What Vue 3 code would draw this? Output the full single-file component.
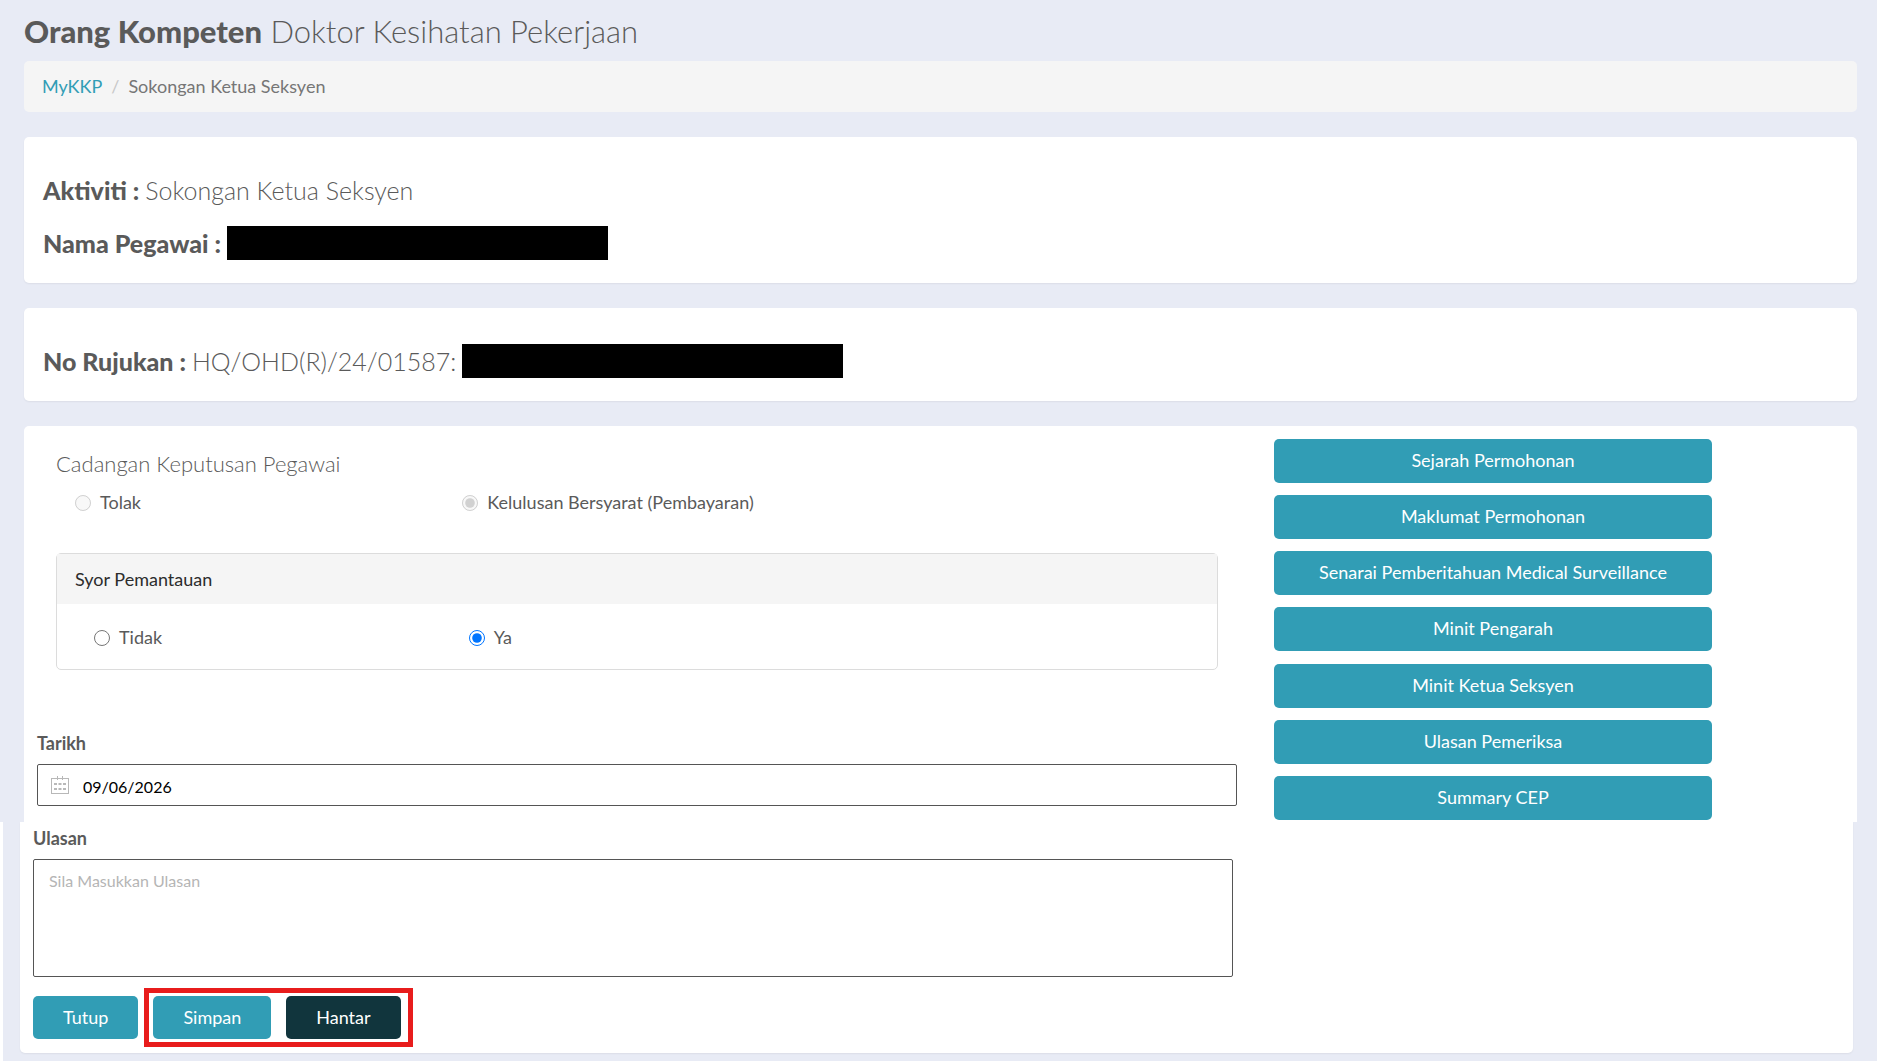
<template>
  <div class="page">
    <main class="upper">
      <h1><strong>Orang Kompeten</strong> Doktor Kesihatan Pekerjaan</h1>

      <nav class="breadcrumb" aria-label="breadcrumb">
        <a href="#">MyKKP</a>
        <span class="separator">/</span>
        <span>Sokongan Ketua Seksyen</span>
      </nav>

      <section class="card info">
        <h2><strong>Aktiviti :</strong> Sokongan Ketua Seksyen</h2>
        <h2><strong>Nama Pegawai :</strong> <span class="redacted"></span></h2>
      </section>

      <section class="card info">
        <h2><strong>No Rujukan :</strong> HQ/OHD(R)/24/01587: <span class="redacted"></span></h2>
      </section>

      <section class="card card-top columns">
        <div class="decision">
          <div class="inset">
            <h3>Cadangan Keputusan Pegawai</h3>
            <div class="radios">
              <label v-for="option in decisions" :key="option">
                <input type="radio" name="decision" :value="option" v-model="decision" disabled />
                {{ option }}
              </label>
            </div>

            <div class="panel">
              <div class="panel-header">Syor Pemantauan</div>
              <div class="panel-body radios">
                <label v-for="option in ['Tidak', 'Ya']" :key="option">
                  <input type="radio" name="monitoring" :value="option" v-model="monitoring" />
                  {{ option }}
                </label>
              </div>
            </div>
          </div>

          <label class="field-label" for="date">Tarikh</label>
          <div class="date-box">
            <svg width="18" height="18" viewBox="0 0 18 18" fill="none" stroke="#b8b8b8" aria-hidden="true">
              <rect x="0.5" y="2.5" width="17" height="15" />
              <path d="M6.5 0v4M11.5 0v4" />
              <path d="M3 8h3M7.5 8h3M12 8h3M3 13h3M7.5 13h3M12 13h3" stroke-width="2" />
            </svg>
            <input id="date" type="text" v-model="date" />
          </div>
        </div>

        <div class="actions">
          <button v-for="action in actions" :key="action" type="button" class="btn">{{ action }}</button>
        </div>
      </section>
    </main>

    <div class="lower">
      <section class="card card-bottom columns">
        <div>
          <label class="field-label" for="comment">Ulasan</label>
          <textarea id="comment" v-model="comment" placeholder="Sila Masukkan Ulasan"></textarea>
          <div class="footer">
            <button type="button" class="btn">Tutup</button>
            <div class="highlight">
              <button type="button" class="btn">Simpan</button>
              <button type="button" class="btn dark">Hantar</button>
            </div>
          </div>
        </div>
      </section>
    </div>
  </div>
</template>

<script setup>
import { ref } from 'vue'

const decisions = ['Tolak', 'Kelulusan Bersyarat (Pembayaran)']
const actions = [
  'Sejarah Permohonan',
  'Maklumat Permohonan',
  'Senarai Pemberitahuan Medical Surveillance',
  'Minit Pengarah',
  'Minit Ketua Seksyen',
  'Ulasan Pemeriksa',
  'Summary CEP'
]

const decision = ref('Kelulusan Bersyarat (Pembayaran)')
const monitoring = ref('Ya')
const date = ref('09/06/2026')
const comment = ref('')
</script>

<style>
body {
  margin: 0;
  background: #e8ebf5;
}
</style>

<style scoped>
.page {
  display: flex;
  flex-direction: column;
  min-height: 100vh;
  color: #5a5a5a;
  font-family: Lato, sans-serif;
  font-size: 18px;
  line-height: 27px;
}

.page * {
  box-sizing: border-box;
}

.upper {
  padding: 11px 20px 0 24px;
}

.lower {
  flex: 1;
  padding: 0 24px 8px 17px;
  border-left: 3px solid #fff;
}

h1,
h2,
h3 {
  margin: 0;
  font-weight: 300;
}

h1 {
  margin-bottom: 10px;
  font-size: 31px;
  line-height: 40px;
}

h1 strong,
h2 strong {
  font-weight: 900;
}

h2 {
  display: flex;
  align-items: center;
  gap: 6px;
  height: 34px;
  font-size: 25px;
}

h3 {
  font-size: 22px;
}

.breadcrumb {
  display: flex;
  gap: 9px;
  padding: 12px 18px;
  margin-bottom: 25px;
  border-radius: 5px;
  background: #f5f5f5;
  color: #767676;
}

.breadcrumb a {
  color: #319db5;
  text-decoration: none;
}

.separator {
  color: #c8c8c8;
}

.card {
  border-radius: 5px;
  background: #fff;
  box-shadow: 0 1px 2px rgba(0, 0, 0, 0.06);
}

.info {
  display: flex;
  flex-direction: column;
  gap: 19px;
  padding: 36px 19px 23px;
  margin-bottom: 25px;
}

.redacted {
  width: 381px;
  height: 34px;
  background: #000;
}

.columns {
  display: grid;
  grid-template-columns: 1200fr 438fr 108fr;
  column-gap: 37px;
  padding-left: 13px;
}

.card-top {
  border-radius: 5px 5px 0 0;
  box-shadow: none;
}

.card-bottom {
  border-radius: 0 0 5px 5px;
  padding-top: 3px;
  padding-bottom: 6px;
}

.decision {
  padding: 24px 0 16px;
}

.inset {
  padding: 0 19px;
}

.radios {
  display: grid;
  grid-template-columns: 1fr 2fr;
  padding-top: 12px;
}

.radios label {
  display: flex;
  align-items: center;
  gap: 9px;
  padding-left: 19px;
}

.radios input {
  width: 16px;
  height: 16px;
  margin: 0;
}

.panel {
  margin: 37px 0 60px;
  border: 1px solid #dcdcdc;
  border-radius: 5px;
}

.panel-header {
  padding: 12px 18px 11px;
  background: #f5f5f5;
  color: #2c2c2c;
}

.panel-body {
  padding: 20px 18px 18px;
}

.field-label {
  display: block;
  margin-bottom: 7px;
  font-weight: 700;
}

.date-box {
  display: flex;
  align-items: center;
  gap: 14px;
  height: 42px;
  padding: 0 13px;
  border: 1px solid #555;
  border-radius: 2px;
}

.date-box input {
  flex: 1;
  padding: 2px 0 0;
  border: 0;
  outline: 0;
  background: none;
  color: #000;
  font: 16px Lato, sans-serif;
}

textarea {
  display: block;
  width: 100%;
  height: 118px;
  padding: 11px 15px;
  border: 1px solid #555;
  border-radius: 2px;
  outline: 0;
  resize: none;
  font: 16px Lato, sans-serif;
}

textarea::placeholder {
  color: #b5b5b5;
}

.btn {
  min-height: 43px;
  padding: 0 30px 2px;
  border: 0;
  border-radius: 5px;
  background: #319db5;
  color: #fff;
  font: 18px Lato, sans-serif;
}

.btn.dark {
  background: #11353d;
}

.actions {
  display: flex;
  flex-direction: column;
  justify-content: space-between;
  padding: 13px 0 2px;
}

.actions .btn {
  min-height: 44px;
}

.footer {
  display: flex;
  align-items: center;
  gap: 6px;
  margin-top: 11px;
}

.highlight {
  display: flex;
  gap: 15px;
  padding: 3px 7px 3px 4px;
  border: 5px solid #e81c1c;
}
</style>
